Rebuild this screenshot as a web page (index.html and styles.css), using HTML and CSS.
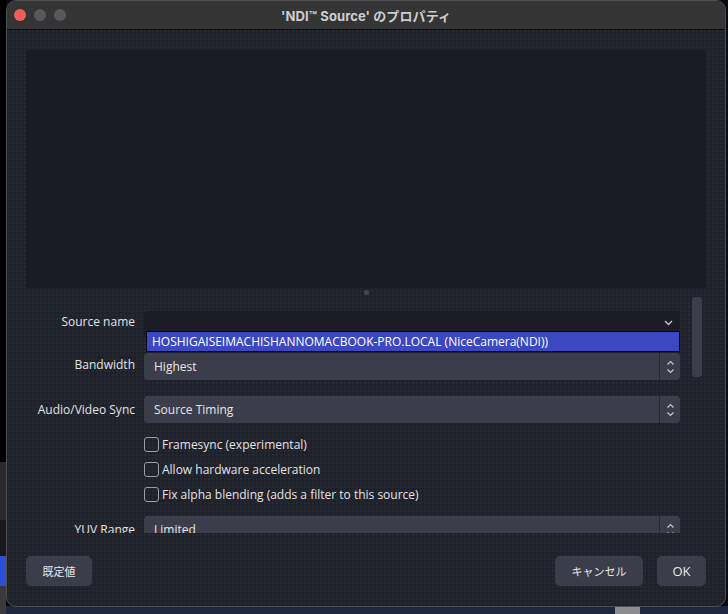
FILE: index.html
```html
<!DOCTYPE html>
<html lang="ja">
<head>
<meta charset="utf-8">
<title>'NDI™ Source' のプロパティ</title>
<link rel="stylesheet" href="styles.css">
</head>
<body>
<div class="window">
  <div class="titlebar">
    <div class="lights">
      <span class="light red"></span>
      <span class="light gray"></span>
      <span class="light gray"></span>
    </div>
    <div class="title">'NDI™ Source' のプロパティ</div>
    <div></div>
  </div>
  <div class="content">
    <div class="preview"></div>
    <div class="splitter"><span class="dot"></span></div>
    <div class="scrollarea">
      <div class="form">
        <div class="row r-source">
          <div class="label">Source name</div>
          <div class="combo dark">
            <svg class="chev" width="9" height="6" viewBox="0 0 9 6"><path d="M1 1 L4.5 4.5 L8 1" fill="none" stroke="#c8c8cc" stroke-width="1.3"/></svg>
            <div class="popup">HOSHIGAISEIMACHISHANNOMACBOOK-PRO.LOCAL (NiceCamera(NDI))</div>
          </div>
        </div>
        <div class="row r-band">
          <div class="label">Bandwidth</div>
          <div class="combo">
            <span class="value">Highest</span>
            <span class="spin">
              <svg width="9" height="14" viewBox="0 0 9 14"><path d="M1.5 4.5 L4.5 1.5 L7.5 4.5 M1.5 9.5 L4.5 12.5 L7.5 9.5" fill="none" stroke="#c8c8cc" stroke-width="1.2"/></svg>
            </span>
          </div>
        </div>
        <div class="row r-av">
          <div class="label">Audio/Video Sync</div>
          <div class="combo">
            <span class="value">Source Timing</span>
            <span class="spin">
              <svg width="9" height="14" viewBox="0 0 9 14"><path d="M1.5 4.5 L4.5 1.5 L7.5 4.5 M1.5 9.5 L4.5 12.5 L7.5 9.5" fill="none" stroke="#c8c8cc" stroke-width="1.2"/></svg>
            </span>
          </div>
        </div>
        <div class="row r-check first">
          <div></div>
          <label class="check"><span class="box"></span>Framesync (experimental)</label>
        </div>
        <div class="row r-check">
          <div></div>
          <label class="check"><span class="box"></span>Allow hardware acceleration</label>
        </div>
        <div class="row r-check">
          <div></div>
          <label class="check"><span class="box"></span>Fix alpha blending (adds a filter to this source)</label>
        </div>
        <div class="row r-yuv">
          <div class="label">YUV Range</div>
          <div class="combo">
            <span class="value">Limited</span>
            <span class="spin">
              <svg width="9" height="14" viewBox="0 0 9 14"><path d="M1.5 4.5 L4.5 1.5 L7.5 4.5 M1.5 9.5 L4.5 12.5 L7.5 9.5" fill="none" stroke="#c8c8cc" stroke-width="1.2"/></svg>
            </span>
          </div>
        </div>
      </div>
      <div class="scrolltrack"><div class="thumb"></div></div>
    </div>
    <div class="buttons">
      <button class="btn defaults">既定値</button>
      <div class="right">
        <button class="btn cancel">キャンセル</button>
        <button class="btn ok">OK</button>
      </div>
    </div>
  </div>
</div>
</body>
</html>
```
FILE: styles.css
```css
html, body {
  margin: 0;
  padding: 0;
}
body {
  width: 728px;
  height: 614px;
  overflow: hidden;
  background-color: #0b0b0d;
  background-image:
    linear-gradient(to bottom, #000 0, #000 462px, #2a2a2e 462px, #2a2a2e 520px, #18181d 520px, #18181d 556px, #2b50d6 556px, #2b50d6 586px, #3a3a3e 586px),
    linear-gradient(to right, #2a2b30 0, #2a2b30 6px, #1c2740 6px, #1c2740 615px, #8c8c90 615px, #8c8c90 640px, #1c2740 640px);
  background-size: 6px 100%, 100% 8px;
  background-position: 0 0, 0 606px;
  background-repeat: no-repeat;
  font-family: "Open Sans", "Noto Sans CJK JP", sans-serif;
}
.window {
  margin-left: 6px;
  width: 720px;
  height: 607px;
  box-sizing: border-box;
  border: 1px solid #4f4f52;
  border-radius: 10px;
  overflow: hidden;
  background-color: #20222b;
  background-image: radial-gradient(rgba(255,255,255,0.035) 0.7px, transparent 1px);
  background-size: 4px 4px;
  display: flex;
  flex-direction: column;
}
.titlebar {
  height: 28px;
  flex: none;
  background: #353536;
  border-bottom: 1px solid #0c0c0e;
  display: grid;
  grid-template-columns: 1fr auto 1fr;
  align-items: center;
}
.lights {
  display: flex;
  gap: 8px;
  padding-left: 7px;
}
.light {
  width: 12px;
  height: 12px;
  border-radius: 50%;
}
.light.red { background: #ed5f58; }
.light.gray { background: #59585d; }
.title {
  font-family: "Inter", "Noto Sans CJK JP", sans-serif;
  font-weight: 700;
  font-size: 13px;
  color: #cdcdcf;
  letter-spacing: 0.1px;
}
.content {
  flex: 1;
  padding: 20px 19px 20px;
  display: flex;
  flex-direction: column;
}
.preview {
  height: 238px;
  flex: none;
  background: #1a1b24;
}
.splitter {
  height: 9px;
  flex: none;
  display: flex;
  justify-content: center;
  align-items: center;
}
.dot {
  width: 5px;
  height: 5px;
  border-radius: 50%;
  background: #45474f;
}
.scrollarea {
  height: 236px;
  flex: none;
  overflow: hidden;
  display: flex;
}
.form {
  width: 654px;
  padding-top: 14px;
  display: flex;
  flex-direction: column;
}
.row {
  display: grid;
  grid-template-columns: 109px 536px;
  column-gap: 9px;
  align-items: center;
  flex: none;
}
.label {
  text-align: right;
  font-size: 12px;
  color: #e2e2e6;
  white-space: nowrap;
}
.r-source .label { position: relative; top: -3px; }
.r-band .label { position: relative; top: -2px; }
.r-band { margin-top: 15px; }
.r-av { margin-top: 16px; }
.r-check { margin-top: 10px; }
.r-check.first { margin-top: 14px; }
.r-yuv { margin-top: 14px; }
.combo {
  position: relative;
  height: 27px;
  background: #3b3d4a;
  border-radius: 4px;
  display: flex;
  align-items: center;
  font-size: 12px;
  color: #e6e6ea;
}
.combo.dark {
  background: #1b1c25;
}
.chev {
  position: absolute;
  right: 7px;
  top: 9px;
}
.value {
  flex: 1;
  padding-left: 10px;
}
.spin {
  width: 21px;
  height: 27px;
  border-left: 1px solid #262833;
  box-sizing: border-box;
  display: flex;
  align-items: center;
  justify-content: center;
}
.popup {
  position: absolute;
  top: 20px;
  left: 2px;
  right: 0;
  height: 21px;
  box-sizing: border-box;
  background: #3c47c2;
  border: 1px solid #08080e;
  color: #ffffff;
  font-size: 12px;
  line-height: 19px;
  padding-left: 5px;
  white-space: nowrap;
  overflow: hidden;
}
.check {
  display: flex;
  align-items: center;
  gap: 3px;
  font-size: 12px;
  color: #e2e2e6;
  height: 15px;
  white-space: nowrap;
}
.box {
  width: 15px;
  height: 15px;
  box-sizing: border-box;
  border: 1.3px solid #9c9ca4;
  border-radius: 3px;
  flex: none;
}
.scrolltrack {
  margin-left: 12px;
  width: 10px;
}
.thumb {
  width: 10px;
  height: 80px;
  border-radius: 3px;
  background: #3b3d4a;
}
.buttons {
  margin-top: 23px;
  display: flex;
  justify-content: space-between;
  align-items: center;
}
.right {
  display: flex;
  gap: 14px;
}
.btn {
  height: 30px;
  border: none;
  border-radius: 5px;
  background: #3b3d4a;
  color: #e8e8ec;
  font-family: "Noto Sans CJK JP", "Open Sans", sans-serif;
  font-size: 11px;
  line-height: 30px;
  padding: 0;
}
.defaults { width: 66px; }
.cancel { width: 88px; }
.ok { width: 49px; font-family: "Open Sans", sans-serif; font-size: 13px; }
```
